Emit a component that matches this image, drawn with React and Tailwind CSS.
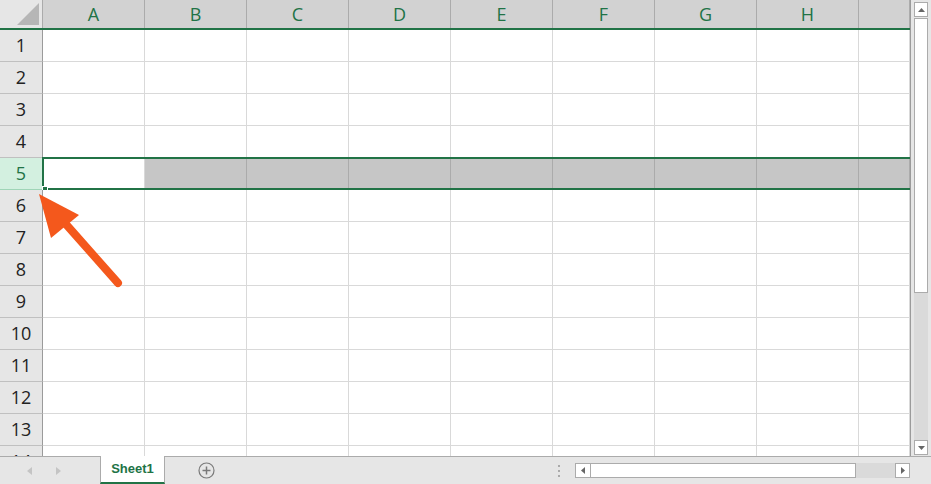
import React from "react";

const cols = ["A", "B", "C", "D", "E", "F", "G", "H", ""];
const rows = [1, 2, 3, 4, 5, 6, 7, 8, 9, 10, 11, 12, 13, 14];

const colW = (i) => (i < 8 ? "w-[102px]" : "w-[51px]");

const App = () => {
  return (
    <div className="w-[931px] h-[484px] bg-white overflow-hidden flex flex-col font-['Open_Sans',sans-serif] relative">
      <div className="flex h-[456px]">
        {/* sheet */}
        <div className="w-[910px] flex flex-col overflow-hidden">
          {/* column headers */}
          <div className="flex h-[30px] shrink-0 border-b-2 border-[#217346]">
            <div className="w-[43px] shrink-0 h-[28px] bg-[#e6e6e6] border-r border-[#ababab] relative">
              <svg className="absolute right-[3px] bottom-[3px]" width="22" height="22" viewBox="0 0 22 22">
                <polygon points="22,0 22,22 0,22" fill="#b6b6b6" />
              </svg>
            </div>
            {cols.map((c, i) => (
              <div
                key={i}
                className={`${colW(i)} shrink-0 h-[28px] bg-[#d2d2d2] border-r border-[#ababab] flex items-center justify-center text-[18px] text-[#217346]`}
              >
                {c}
              </div>
            ))}
          </div>
          {rows.map((r) => {
            const sel = r === 5;
            return (
              <div key={r} className="flex h-[32px] shrink-0 relative">
                <div
                  className={`w-[43px] shrink-0 border-r border-[#9b9b9b] border-b flex items-center justify-center text-[18px] ${
                    sel ? "bg-[#d3f0e0] text-[#217346] border-b-[#9fd5b7]" : "bg-[#e6e6e6] text-[#222] border-b-[#c0c0c0]"
                  }`}
                >
                  {r}
                </div>
                {cols.map((c, i) => (
                  <div
                    key={i}
                    className={`${colW(i)} shrink-0 border-b border-r ${
                      sel && i > 0 ? "bg-[#c6c6c6] border-[#ababab]" : "bg-white border-[#d9d9d9]"
                    }`}
                  />
                ))}
                {sel && (
                  <>
                    <div className="absolute left-[42px] top-[-1px] w-[870px] h-[33px] border-y-2 border-l-2 border-[#217346] pointer-events-none" />
                    <div className="absolute left-[42px] top-[28px] w-[6px] h-[6px] bg-[#217346] border border-white" />
                  </>
                )}
              </div>
            );
          })}
        </div>
        {/* vertical scrollbar */}
        <div className="w-[21px] bg-[#e6e6e6] border-l border-[#9b9b9b] flex flex-col pl-[3px] pr-[3px] pt-[2px] pb-[1px]">
          <div className="h-[15px] bg-white border border-[#ababab] flex items-center justify-center">
            <svg width="7" height="4" viewBox="0 0 7 4"><polygon points="0,4 7,4 3.5,0" fill="#666" /></svg>
          </div>
          <div className="h-[275px] bg-white border border-[#ababab] mt-px" />
          <div className="flex-1 bg-[#dadada]" />
          <div className="h-[15px] bg-white border border-[#ababab] flex items-center justify-center">
            <svg width="7" height="4" viewBox="0 0 7 4"><polygon points="0,0 7,0 3.5,4" fill="#666" /></svg>
          </div>
        </div>
      </div>

      {/* bottom bar */}
      <div className="h-[28px] flex bg-[#e6e6e6] border-t border-[#ababab] items-stretch">
        <div className="w-[100px] flex items-center">
          <svg className="ml-[27px]" width="5" height="8" viewBox="0 0 5 8"><polygon points="5,0 5,8 0,4" fill="#c4c4c4" /></svg>
          <svg className="ml-[24px]" width="5" height="8" viewBox="0 0 5 8"><polygon points="0,0 0,8 5,4" fill="#c4c4c4" /></svg>
        </div>
        <div className="w-[65px] -mt-px bg-white border-x border-[#ababab] border-b-2 border-b-[#217346] flex items-center justify-center text-[13px] font-bold text-[#217346] font-['Liberation_Sans',sans-serif]">
          Sheet1
        </div>
        <div className="w-[82px] flex items-center justify-center pl-[1px]">
          <svg width="17" height="17" viewBox="0 0 17 17">
            <circle cx="8.5" cy="8.5" r="7.5" fill="none" stroke="#7a7a7a" strokeWidth="1.2" />
            <line x1="8.5" y1="4.5" x2="8.5" y2="12.5" stroke="#7a7a7a" strokeWidth="1.5" />
            <line x1="4.5" y1="8.5" x2="12.5" y2="8.5" stroke="#7a7a7a" strokeWidth="1.5" />
          </svg>
        </div>
        <div className="flex-1 flex items-center">
          <div className="ml-[311px] flex flex-col gap-[3px]">
            <div className="w-[2px] h-[2px] bg-[#aaa]" />
            <div className="w-[2px] h-[2px] bg-[#aaa]" />
            <div className="w-[2px] h-[2px] bg-[#aaa]" />
          </div>
          <div className="ml-[15px] w-[335px] h-[15px] flex">
            <div className="w-[16px] bg-white border border-[#ababab] flex items-center justify-center">
              <svg width="4" height="7" viewBox="0 0 4 7"><polygon points="4,0 4,7 0,3.5" fill="#666" /></svg>
            </div>
            <div className="w-[265px] bg-white border-y border-r border-[#ababab]" />
            <div className="flex-1 bg-[#dadada]" />
            <div className="w-[15px] bg-white border border-[#ababab] flex items-center justify-center">
              <svg width="4" height="7" viewBox="0 0 4 7"><polygon points="0,0 0,7 4,3.5" fill="#666" /></svg>
            </div>
          </div>
        </div>
      </div>

      {/* annotation arrow */}
      <svg className="absolute left-0 top-0 pointer-events-none" width="931" height="484">
        <line x1="118" y1="283" x2="64" y2="222" stroke="#f4581c" strokeWidth="8" strokeLinecap="round" />
        <polygon points="39,194 79,215 51,238" fill="#f4581c" />
      </svg>
    </div>
  );
};

export default App;
